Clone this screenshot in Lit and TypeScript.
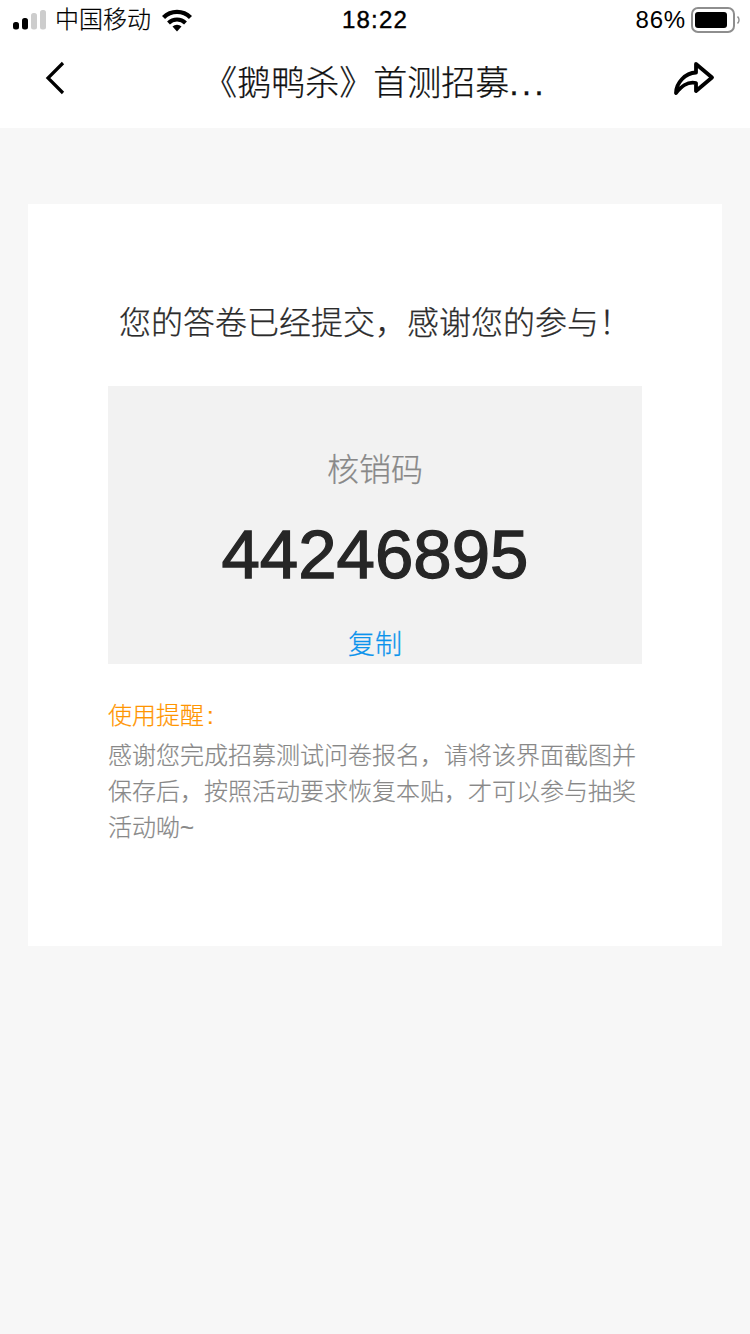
import { LitElement, css, html } from 'lit';
import { customElement } from 'lit/decorators.js';

@customElement('app-root')
export class AppRoot extends LitElement {
  static styles = css`
    :host {
      display: block;
      width: 750px;
      height: 1334px;
      overflow: hidden;
      background: #f7f7f7;
      font-family: "Liberation Sans", "Noto Sans CJK SC", sans-serif;
      font-weight: 400;
    }

    .top {
      background: #fff;
      height: 128px;
    }

    .status {
      height: 40px;
      display: grid;
      grid-template-columns: 1fr auto 1fr;
      align-items: center;
      padding: 0 13px;
      color: #000;
    }

    .status-left {
      display: flex;
      align-items: center;
    }

    .signal {
      width: 34px;
      height: 20px;
      margin-right: 8px;
    }

    .carrier {
      font-size: 24px;
      font-weight: 300;
      line-height: 40px;
      margin-right: 11px;
      -webkit-text-stroke: 0.2px #000;
    }

    .wifi {
      width: 30px;
      height: 23px;
    }

    .time {
      font-size: 24px;
      line-height: 40px;
      letter-spacing: 1.2px;
      -webkit-text-stroke: 0.4px #000;
    }

    .status-right {
      display: flex;
      align-items: center;
      justify-content: flex-end;
    }

    .percent {
      font-size: 24px;
      line-height: 40px;
      letter-spacing: 0.8px;
      margin-right: 5px;
    }

    .battery {
      width: 49px;
      height: 26px;
      margin-right: -3px;
    }

    .nav {
      height: 88px;
      display: grid;
      grid-template-columns: 110px 1fr 110px;
      align-items: center;
    }

    .back {
      width: 22px;
      height: 34px;
      margin: -12px 0 0 45px;
    }

    .nav-title {
      text-align: center;
      font-size: 34px;
      font-weight: 300;
      line-height: 88px;
      color: #111;
      white-space: nowrap;
      margin-top: -2px;
      -webkit-text-stroke: 0.25px #111;
    }

    .dots {
      letter-spacing: 3px;
    }

    .share {
      width: 42px;
      height: 38px;
      justify-self: end;
      margin: -8px 35px 0 0;
    }

    .content {
      padding: 76px 28px 0;
    }

    .card {
      height: 742px;
      box-sizing: border-box;
      background: #fff;
      padding: 97px 80px 0;
    }

    h1 {
      margin: 0;
      font-size: 32px;
      font-weight: 300;
      line-height: 44px;
      color: #2b2b2b;
      text-align: center;
      white-space: nowrap;
      -webkit-text-stroke: 0.25px #2b2b2b;
    }

    .code-box {
      margin-top: 41px;
      height: 278px;
      background: #f2f2f2;
      display: flex;
      flex-direction: column;
      align-items: center;
      padding-top: 62px;
      box-sizing: border-box;
    }

    .code-label {
      font-size: 32px;
      font-weight: 300;
      line-height: 44px;
      color: #888;
      -webkit-text-stroke: 0.25px #888;
    }

    .code {
      margin-top: 25px;
      font-size: 69px;
      line-height: 76px;
      color: #262626;
      -webkit-text-stroke: 1.3px #262626;
    }

    .copy {
      margin-top: 33px;
      font-size: 27px;
      font-weight: 300;
      line-height: 38px;
      color: #0b93ec;
      -webkit-text-stroke: 0.25px #0b93ec;
    }

    .notice {
      margin-top: 32px;
    }

    .notice-title {
      font-size: 24px;
      font-weight: 300;
      line-height: 40px;
      color: #ff9500;
      -webkit-text-stroke: 0.2px #ff9500;
    }

    .colon {
      margin-left: 3px;
    }

    .notice-text {
      margin: 2px 0 0;
      font-size: 24px;
      font-weight: 300;
      line-height: 36px;
      color: #888;
      -webkit-text-stroke: 0.2px #888;
    }
  `;

  render() {
    return html`
      <div class="top">
        <div class="status">
          <div class="status-left">
            <svg class="signal" viewBox="0 0 34 20">
              <rect x="0" y="12" width="6" height="7.5" rx="2.5" fill="#000"></rect>
              <rect x="9" y="8" width="6" height="11.5" rx="2.5" fill="#000"></rect>
              <rect x="18" y="3" width="6" height="16.5" rx="2.5" fill="#cdcdcd"></rect>
              <rect x="27" y="0" width="6" height="19.5" rx="2.5" fill="#cdcdcd"></rect>
            </svg>
            <span class="carrier">中国移动</span>
            <svg class="wifi" viewBox="0 0 30 23">
              <path d="M1.5 8.5 A19 19 0 0 1 28.5 8.5" fill="none" stroke="#000" stroke-width="4.4"></path>
              <path d="M6.5 14 A12 12 0 0 1 23.5 14" fill="none" stroke="#000" stroke-width="4"></path>
              <path d="M10.5 17.5 A6.5 6.5 0 0 1 19.5 17.5 L15 22.5 Z" fill="#000"></path>
            </svg>
          </div>
          <div class="time">18:22</div>
          <div class="status-right">
            <span class="percent">86%</span>
            <svg class="battery" viewBox="0 0 49 26">
              <rect x="1" y="1" width="42" height="24" rx="6" fill="none" stroke="#8e8e8e" stroke-width="2"></rect>
              <rect x="4" y="5" width="32" height="16" rx="3" fill="#000"></rect>
              <path d="M46.5 9.5 A5 5 0 0 1 46.5 16.5" fill="none" stroke="#8e8e8e" stroke-width="1.6"></path>
            </svg>
          </div>
        </div>
        <div class="nav">
          <svg class="back" viewBox="0 0 22 34">
            <path d="M18 2 L3 17 L18 32" fill="none" stroke="#000" stroke-width="3.2"></path>
          </svg>
          <div class="nav-title">《鹅鸭杀》首测招募<span class="dots">...</span></div>
          <svg class="share" viewBox="0 0 42 38">
            <path
              d="M3 32 C3 22 12 12 23 11.5 L23 3 L39 16.5 L23 30 L23 22 C14 20 8 26 3 32 Z"
              fill="none"
              stroke="#000"
              stroke-width="3.8"
              stroke-linejoin="round"
            ></path>
          </svg>
        </div>
      </div>
      <div class="content">
        <div class="card">
          <h1>您的答卷已经提交，感谢您的参与！</h1>
          <div class="code-box">
            <div class="code-label">核销码</div>
            <div class="code">44246895</div>
            <div class="copy">复制</div>
          </div>
          <div class="notice">
            <div class="notice-title">使用提醒<span class="colon">:</span></div>
            <p class="notice-text">
              感谢您完成招募测试问卷报名，请将该界面截图并保存后，按照活动要求恢复本贴，才可以参与抽奖活动呦~
            </p>
          </div>
        </div>
      </div>
    `;
  }
}
